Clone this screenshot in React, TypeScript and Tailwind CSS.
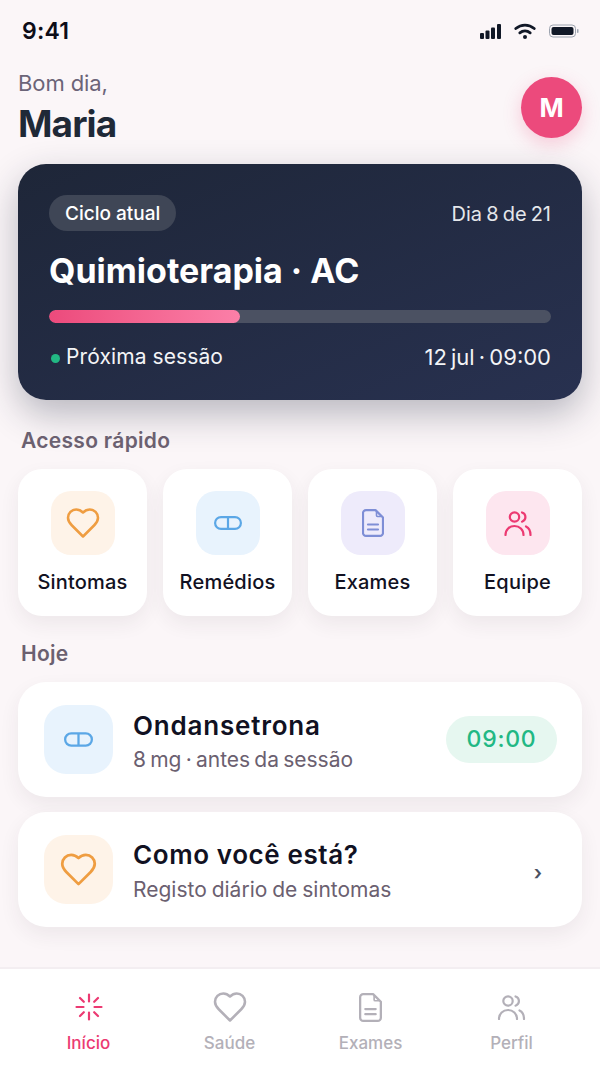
import React from "react";

const font = { fontFamily: '"Inter", "Noto Sans", sans-serif' };

function Heart({ className }: { className: string }) {
  return (
    <svg viewBox="0 0 24 24" fill="none" stroke="currentColor" strokeWidth={1.7} strokeLinejoin="round" strokeLinecap="round" className={className}>
      <path d="M19.5 13.5c1.3-1.3 2.5-2.8 2.5-5A5.5 5.500 0 0 0 16.5 3c-1.8 0-3 .5-4.5 2-1.5-1.5-2.7-2-4.5-2A5.500 5.500 0 0 0 2 8.500c0 2.200 1.200 3.700 2.500 5L12 21Z" />
    </svg>
  );
}

function Pill({ className }: { className: string }) {
  return (
    <svg viewBox="0 0 28 14" fill="none" stroke="currentColor" strokeWidth={2.2} className={className}>
      <rect x="1.100" y="1.100" width="25.800" height="11.800" rx="5.900" />
      <path d="M14 1v12" />
    </svg>
  );
}

function Doc({ className }: { className: string }) {
  return (
    <svg viewBox="0 0 22 28" fill="none" stroke="currentColor" strokeWidth={2.2} strokeLinecap="round" strokeLinejoin="round" className={className}>
      <path d="M13.500 1.100H4a3 3 0 0 0-3 3v19.800a3 3 0 0 0 3 3h14a3 3 0 0 0 3-3V8.500Z" />
      <path d="M14.500 3v3.500a1 1 0 0 0 1 1H19" strokeWidth={1.6} />
      <path d="M6 15.500h10M6 20.500h10" />
    </svg>
  );
}

function People({ className }: { className: string }) {
  return (
    <svg viewBox="0 0 28 25" fill="none" stroke="currentColor" strokeWidth={2.2} strokeLinecap="round" className={className}>
      <circle cx="10.500" cy="6" r="4.700" />
      <path d="M1.500 24c0-5.500 4-9 9-9s9 3.500 9 9" />
      <path d="M18 1.500a4.800 4.800 0 0 1 0 9.200" />
      <path d="M22 15.500c2.800 1.300 4.500 4.500 4.500 8.500" />
    </svg>
  );
}

function Loader({ className }: { className: string }) {
  return (
    <svg viewBox="0 0 28 28" fill="none" stroke="currentColor" strokeWidth={2.2} strokeLinecap="round" className={className}>
      <path d="M14 1.500v7M14 19.500v7M1.500 14h7M19.500 14h7M5 5l3.800 3.800M19.200 19.200 23 23M5 23l3.800-3.800M19.200 8.800 23 5" />
    </svg>
  );
}

function StatusIcons() {
  return (
    <div className="flex items-center gap-[13px]">
      <svg viewBox="0 0 21 15" className="w-[21px] h-[15px] text-[#111827]" fill="currentColor">
        <rect x="0" y="9" width="4" height="6" rx="1" />
        <rect x="5.500" y="6.500" width="4" height="8.500" rx="1" />
        <rect x="11" y="3.500" width="4" height="11.500" rx="1" />
        <rect x="17" y="0" width="4" height="15" rx="1" />
      </svg>
      <svg viewBox="0 0 22 16" className="w-[22px] h-[16px] text-[#111827]" fill="none" stroke="currentColor" strokeWidth={2.800} strokeLinecap="round">
        <path d="M1.800 5.500a14 14 0 0 1 18.400 0" />
        <path d="M5.800 9.800a8.500 8.500 0 0 1 10.400 0" />
        <circle cx="11" cy="14" r="2" fill="currentColor" stroke="none" />
      </svg>
      <svg viewBox="0 0 30 14" className="w-[30px] h-[14px]" fill="none">
        <rect x="0.500" y="1" width="26" height="12" rx="3.500" stroke="#9ca3af" />
        <rect x="2.500" y="3" width="22" height="8" rx="2" fill="#111827" />
        <rect x="28" y="5" width="1.500" height="4" rx="0.750" fill="#9ca3af" />
      </svg>
    </div>
  );
}

function Tile({ bg, icon, label }: { bg: string; icon: React.ReactNode; label: string }) {
  return (
    <div className="h-[147px] rounded-[24px] bg-white shadow-[0_8px_20px_rgba(60,40,60,0.07)] flex flex-col items-center pt-[22px]">
      <div className={`w-[64px] h-[64px] rounded-[20px] flex items-center justify-center ${bg}`}>{icon}</div>
      <div className="mt-[15px] text-[20px] leading-[24px] font-medium text-[#111122] tracking-[0.2px]">{label}</div>
    </div>
  );
}

function NavItem({ icon, label, cls }: { icon: React.ReactNode; label: string; cls: string }) {
  return (
    <div className={`flex flex-col items-center ${cls}`}>
      <div className="h-[30px] flex items-center justify-center">{icon}</div>
      <div className="mt-[10px] text-[17px] leading-[22px] font-medium">{label}</div>
    </div>
  );
}

export default function App() {
  return (
    <div style={font} className="w-[600px] h-[1070px] bg-[#fbf6f8] flex flex-col overflow-hidden">
      <div className="h-[62px] flex items-center justify-between pl-[22px] pr-[21px]">
        <div className="text-[23px] font-semibold text-[#0d0d18] tracking-[0.2px]">9:41</div>
        <StatusIcons />
      </div>
      <div className="flex items-center justify-between px-[18px] h-[102px] pb-[12px]">
        <div className="flex flex-col">
          <div className="text-[22px] leading-[28px] text-[#6b6478] tracking-[-0.1px]">Bom dia,</div>
          <div className="mt-[5px] text-[37px] leading-[44px] font-bold text-[#1f2937] tracking-[-0.9px]">Maria</div>
        </div>
        <div className="w-[61px] h-[61px] rounded-full bg-[#ec4a7c] flex items-center justify-center text-white text-[26px] font-bold shadow-[0_6px_18px_rgba(236,72,122,0.25)]">M</div>
      </div>
      <div className="mx-[18px] h-[236px] rounded-[28px] bg-gradient-to-br from-[#1e2638] to-[#283150] shadow-[0_14px_36px_rgba(30,38,60,0.3)] px-[31px] pt-[31px] flex flex-col text-white">
        <div className="flex items-center justify-between">
          <div className="h-[36px] px-[16px] pt-[2px] rounded-full bg-[#3f4656] flex items-center text-[19px] font-medium">Ciclo atual</div>
          <div className="text-[20px] text-[#e5e7eb] [word-spacing:-1.500px] pt-[2px]">Dia 8 de 21</div>
        </div>
        <div className="mt-[17px] text-[34px] leading-[46px] font-bold">Quimioterapia · AC</div>
        <div className="mt-[16px] h-[13px] rounded-full bg-[#4b5162] overflow-hidden">
          <div className="h-full w-[38%] rounded-full bg-gradient-to-r from-[#ec4a7c] to-[#fb7fa8]" />
        </div>
        <div className="mt-[20px] flex items-center justify-between text-[21px] leading-[28px] text-[#f3f4f6]">
          <div className="flex items-center gap-[6px]">
            <span className="w-[9px] h-[9px] ml-[2px] mt-[2px] rounded-full bg-[#22b884]" />
            <span className="tracking-[0.1px]">Próxima sessão</span>
          </div>
          <div className="text-[22px] [word-spacing:-2px]">12 jul · 09:00</div>
        </div>
      </div>
      <div className="mt-[28px] ml-[21px] text-[21px] leading-[26px] font-semibold text-[#6b6070] tracking-[0.3px]">Acesso rápido</div>
      <div className="mt-[15px] mx-[18px] grid grid-cols-4 gap-[16px]">
        <Tile bg="bg-[#fef3e8]" label="Sintomas" icon={<Heart className="w-[36px] h-[36px] text-[#ef9d41]" />} />
        <Tile bg="bg-[#e8f3fd]" label="Remédios" icon={<Pill className="w-[28px] h-[14px] text-[#5ba7e6]" />} />
        <Tile bg="bg-[#eeebfb]" label="Exames" icon={<Doc className="w-[22px] h-[28px] text-[#7e8ed6]" />} />
        <Tile bg="bg-[#fde6ef]" label="Equipe" icon={<People className="w-[28px] h-[25px] text-[#ec3a72]" />} />
      </div>
      <div className="mt-[25px] ml-[21px] text-[21px] leading-[26px] font-semibold text-[#6b6070] tracking-[0.3px]">Hoje</div>
      <div className="mt-[15px] mx-[18px] h-[115px] rounded-[28px] bg-white shadow-[0_8px_20px_rgba(60,40,60,0.07)] flex items-center pl-[26px] pr-[25px]">
        <div className="w-[69px] h-[69px] rounded-[22px] bg-[#e8f3fd] flex items-center justify-center"><Pill className="w-[29px] h-[15px] text-[#5ba7e6]" /></div>
        <div className="ml-[20px] flex-1 pt-[3px]">
          <div className="text-[26px] leading-[32px] font-semibold text-[#111122] tracking-[0.8px]">Ondansetrona</div>
          <div className="mt-[5px] text-[21px] leading-[26px] text-[#6b6070] [word-spacing:-1.700px]">8 mg · antes da sessão</div>
        </div>
        <div className="w-[111px] h-[47px] rounded-full bg-[#e6f7f0] flex items-center justify-center text-[23px] font-medium text-[#22b884] tracking-[0.8px]">09:00</div>
      </div>
      <div className="mt-[15px] mx-[18px] h-[115px] rounded-[28px] bg-white shadow-[0_8px_20px_rgba(60,40,60,0.07)] flex items-center pl-[26px] pr-[40px]">
        <div className="w-[69px] h-[69px] rounded-[22px] bg-[#fef3e8] flex items-center justify-center"><Heart className="w-[39px] h-[39px] text-[#ef9d41]" /></div>
        <div className="ml-[20px] flex-1 pt-[3px]">
          <div className="text-[26px] leading-[32px] font-semibold text-[#111122] tracking-[0.6px]">Como você está?</div>
          <div className="mt-[6px] text-[21px] leading-[26px] text-[#6b6070] [word-spacing:-1px]">Registo diário de sintomas</div>
        </div>
        <div className="text-[20px] font-semibold text-[#4b5162] pt-[6px]">›</div>
      </div>
      <div className="mt-auto h-[103px] bg-white border-t-2 border-[#f3eef1] px-[18px] pt-[23px] grid grid-cols-4">
        <NavItem cls="text-[#ec3a72]" label="Início" icon={<Loader className="w-[28px] h-[28px]" />} />
        <NavItem cls="text-[#b3b0b8]" label="Saúde" icon={<Heart className="w-[36px] h-[36px]" />} />
        <NavItem cls="text-[#b3b0b8]" label="Exames" icon={<Doc className="w-[23px] h-[29px]" />} />
        <NavItem cls="text-[#b3b0b8]" label="Perfil" icon={<People className="w-[29px] h-[25px]" />} />
      </div>
    </div>
  );
}
